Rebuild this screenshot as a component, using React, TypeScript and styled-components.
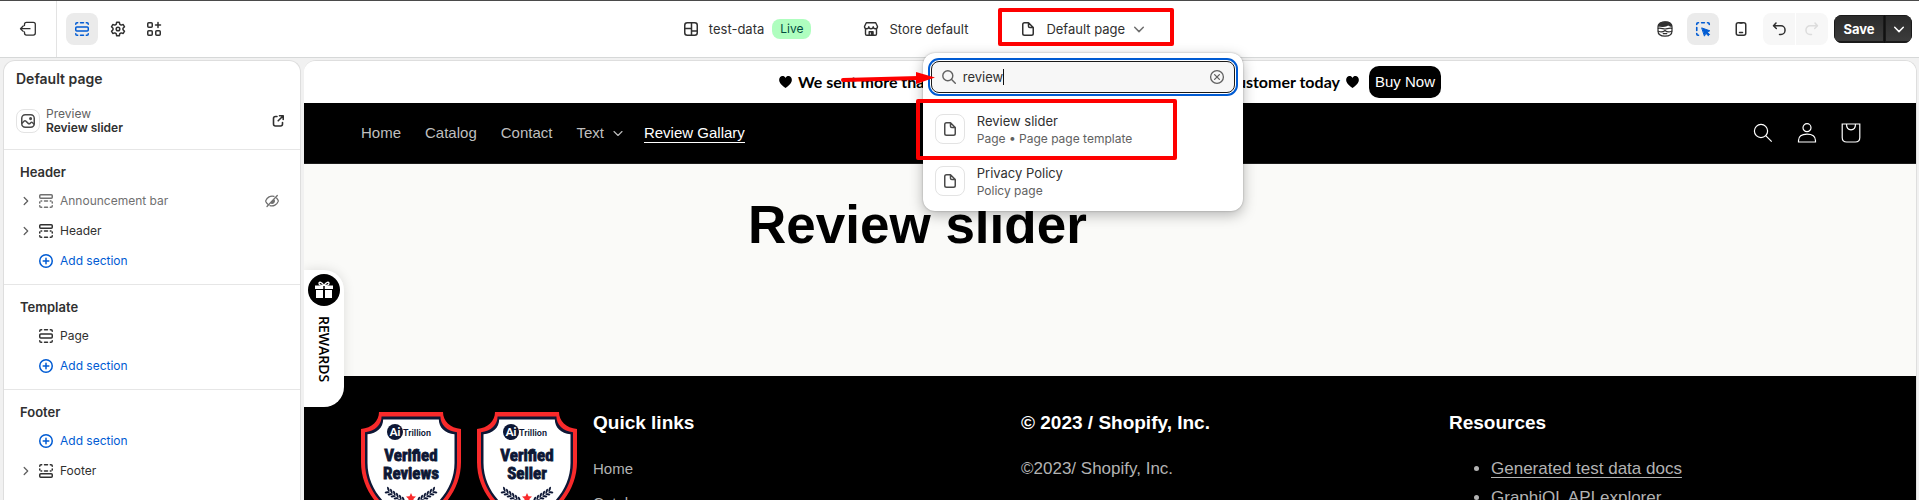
import React from "react";
import styled, { createGlobalStyle, css } from "styled-components";

const ui = `Inter, "Liberation Sans", sans-serif`;
const shop = `"Liberation Sans", Arial, sans-serif`;

const GlobalStyle = createGlobalStyle`
  * { box-sizing: border-box; }
  body { margin: 0; background: #f1f1f1; font-family: ${ui}; color: #303030; }
  button, input { font: inherit; color: inherit; }
  h1, h2, h3, p, ul { margin: 0; padding: 0; }
  svg { display: block; flex: none; }
`;

const Shell = styled.div`
  display: flex;
  flex-direction: column;
  height: 100vh;
  overflow: hidden;
  border-top: 1px solid #4a4a4a;
`;

/* ---------- top bar ---------- */
const TopBar = styled.header`
  position: relative;
  z-index: 2;
  display: flex;
  align-items: center;
  flex: none;
  height: 57px;
  padding-right: 7px;
  background: #fff;
  border-bottom: 1px solid #d6d8d8;
`;
const ExitArea = styled.div`
  display: flex;
  align-items: center;
  justify-content: center;
  width: 57px;
  align-self: stretch;
  border-right: 1px solid #e3e3e3;
`;
const ToolGroup = styled.div<{ $gap: number }>`
  display: flex;
  align-items: center;
  gap: ${(p) => p.$gap}px;
`;
const LeftTools = styled(ToolGroup)`
  padding-left: 9px;
`;
const ToolButton = styled.button<{ $active?: boolean }>`
  display: flex;
  align-items: center;
  justify-content: center;
  width: 32px;
  height: 32px;
  padding: 0;
  border: 0;
  border-radius: 8px;
  background: ${(p) => (p.$active ? "#ebebeb" : "transparent")};
  color: ${(p) => (p.$active ? "#005bd3" : "#303030")};
`;
const HistoryGroup = styled.div`
  display: flex;
  gap: 1px;
  border-radius: 8px;
  overflow: hidden;
`;
const HistoryButton = styled(ToolButton)`
  border-radius: 0;
  background: #f7f7f7;
  &:disabled { color: #dcdcdc; }
`;
const SaveGroup = styled.div`
  display: flex;
  gap: 1px;
  height: 28px;
  border-radius: 8px;
  overflow: hidden;
  background: #111;
`;
const SaveButton = styled.button<{ $width: number }>`
  display: flex;
  align-items: center;
  justify-content: center;
  width: ${(p) => p.$width}px;
  padding: 0;
  border: 1px solid #1a1a1a;
  border-bottom-width: 2px;
  background: linear-gradient(#2b2b2b, #3c3c3c);
  color: #fff;
  font-size: 13px;
  font-weight: 700;
`;
const Contexts = styled.div`
  display: flex;
  flex: 1;
  justify-content: center;
  align-items: center;
  gap: 50px;
  padding-left: 11px;
`;
const ContextButton = styled.button`
  display: flex;
  align-items: center;
  height: 32px;
  padding: 0;
  border: 0;
  background: none;
  font-size: 13px;
  line-height: 20px;
  white-space: nowrap;
  & > svg:first-child { margin-right: 8px; }
  & > svg:nth-child(2) { margin-left: 4px; color: #707070; }
`;
const LiveBadge = styled.span`
  margin-left: 8px;
  padding: 0 8px;
  border-radius: 8px;
  background: #affebf;
  color: #014b40;
  font-size: 12px;
`;
const PickerAnchor = styled.div`
  position: relative;
`;

/* ---------- page picker ---------- */
const Picker = styled.div`
  position: absolute;
  top: 40px;
  left: 50%;
  width: 320px;
  margin-left: -161px;
  padding: 8px 8px 4px;
  border-radius: 12px;
  background: #fff;
  box-shadow: 0 4px 14px rgba(0, 0, 0, 0.28), 0 0 2px rgba(0, 0, 0, 0.3);
`;
const SearchBox = styled.div`
  position: relative;
  display: flex;
  align-items: center;
  gap: 4px;
  height: 32px;
  padding: 0 7px;
  border: 1px solid #1a1a1a;
  border-radius: 8px;
  background: #f7f7f7;
  color: #616161;
  outline: 2px solid #005bd3;
  outline-offset: 1px;
`;
const SearchInput = styled.input`
  flex: 1;
  min-width: 0;
  padding: 0;
  border: 0;
  outline: 0;
  background: none;
  color: #303030;
  font-size: 13px;
  line-height: 20px;
`;
const Caret = styled.span`
  position: absolute;
  left: 71px;
  top: 7px;
  width: 1px;
  height: 16px;
  background: #111;
`;
const ClearButton = styled.button`
  padding: 0;
  border: 0;
  background: none;
  color: #616161;
`;
const Results = styled.ul`
  margin-top: 10px;
  list-style: none;
`;
const Result = styled.button`
  display: flex;
  align-items: center;
  gap: 12px;
  width: 100%;
  height: 52px;
  padding: 0 4px;
  border: 0;
  background: none;
  text-align: left;
`;
const Thumb = styled.span<{ $size: number }>`
  display: flex;
  align-items: center;
  justify-content: center;
  flex: none;
  width: ${(p) => p.$size}px;
  height: ${(p) => p.$size}px;
  border: 1px solid #e3e3e3;
  border-radius: 8px;
  color: #4a4a4a;
`;
const ResultTitle = styled.span`
  display: block;
  font-size: 13px;
  line-height: 20px;
`;
const ResultMeta = styled.span`
  display: block;
  color: #616161;
  font-size: 12px;
  line-height: 16px;
`;

/* ---------- annotations ---------- */
const Mark = styled.div`
  position: absolute;
  border: 4px solid #fe0000;
  border-radius: 2px;
  pointer-events: none;
`;
const TriggerMark = styled(Mark)`
  inset: -5px -25px -1px -20px;
`;
const ResultMark = styled(Mark)`
  top: 46px;
  left: -7px;
  width: 261px;
  height: 61px;
`;
const Arrow = styled.svg`
  position: absolute;
  top: 16px;
  left: -82px;
`;

/* ---------- sidebar ---------- */
const Workspace = styled.div`
  display: flex;
  flex: 1;
  min-height: 0;
  gap: 3px;
  padding: 2px 2px 0 3px;
`;
const Sidebar = styled.aside`
  flex: none;
  width: 298px;
  border: 1px solid #dedede;
  border-bottom: 0;
  border-radius: 12px 12px 0 0;
  background: #fff;
  overflow: hidden;
`;
const SidebarTitle = styled.h2`
  padding: 8px 12px;
  font-size: 14px;
  line-height: 20px;
  font-weight: 600;
`;
const PreviewRow = styled.div`
  display: flex;
  align-items: center;
  gap: 6px;
  height: 48px;
  margin-bottom: 4px;
  padding: 0 12px;
  & > svg { margin-left: auto; }
`;
const PreviewLabel = styled.div`
  color: #616161;
  font-size: 12px;
  line-height: 14px;
  strong { display: block; color: #303030; font-weight: 600; }
`;
const Section = styled.section`
  padding: 8px 16px;
  border-top: 1px solid #e6e6e6;
`;
const SectionTitle = styled.h3`
  font-size: 13px;
  line-height: 28px;
  font-weight: 600;
`;
const TreeRow = styled.button<{ $link?: boolean; $muted?: boolean }>`
  display: grid;
  grid-template-columns: 16px 20px 1fr 22px;
  align-items: center;
  width: 100%;
  height: 30px;
  padding: 0;
  border: 0;
  background: none;
  text-align: left;
  font-size: 12px;
  line-height: 20px;
  color: ${(p) => (p.$link ? "#005bd3" : p.$muted ? "#707070" : "#303030")};
  span:first-child { color: #616161; }
  span:nth-child(3) { padding-left: 4px; }
`;

/* ---------- storefront preview ---------- */
const Storefront = styled.main`
  position: relative;
  flex: 1;
  min-width: 0;
  border: 1px solid #dedede;
  border-width: 1px 1px 0 0;
  border-radius: 12px 12px 0 0;
  overflow: hidden;
  background: #fafaf8;
  font-family: ${shop};
`;
const Announcement = styled.div`
  display: flex;
  align-items: center;
  justify-content: center;
  gap: 6px;
  height: 42px;
  background: #fff;
  color: #000;
`;
const Message = styled.div`
  display: flex;
  justify-content: space-between;
  width: 542px;
  font: 700 16px/20px Lato, sans-serif;
`;
const BuyButton = styled.a`
  margin-left: 4px;
  padding: 0 6px;
  border-radius: 10px;
  background: #000;
  color: #fff;
  font-size: 15px;
  line-height: 32px;
  text-decoration: none;
`;
const ShopHeader = styled.header`
  display: flex;
  align-items: center;
  justify-content: space-between;
  height: 61px;
  padding: 0 43px 0 57px;
  background: #000;
  border-bottom: 1px solid #1c1c1c;
`;
const ShopNav = styled.nav`
  display: flex;
  gap: 24px;
`;
const NavLink = styled.a<{ $current?: boolean }>`
  display: flex;
  align-items: center;
  gap: 9px;
  color: #bfbfbf;
  font-size: 15px;
  line-height: 18px;
  text-decoration: none;
  border-bottom: 1px solid transparent;
  svg { margin-right: -3px; }
  ${(p) => p.$current && css`color: #fff; border-color: #fff;`}
`;
const ShopIcons = styled.div`
  display: flex;
`;
const ShopIconButton = styled.button`
  display: flex;
  align-items: center;
  justify-content: center;
  width: 44px;
  height: 44px;
  padding: 0;
  border: 0;
  background: none;
  color: #fff;
`;
const PageBody = styled.article`
  max-width: 724px;
  min-height: 212px;
  margin: 0 auto;
  padding-top: 28px;
`;
const PageTitle = styled.h1`
  color: #000;
  font-size: 53px;
  line-height: 66px;
  font-weight: 700;
`;
const ShopFooter = styled.footer`
  display: grid;
  grid-template-columns: 232px repeat(3, 1fr);
  padding: 36px 39px 36px 57px;
  background: #000;
  color: #b3b3b3;
`;
const Badges = styled.div`
  display: flex;
  gap: 16px;
`;
const FooterTitle = styled.h2`
  margin-bottom: 18px;
  color: #fff;
  font-size: 19px;
  line-height: 22px;
  font-weight: 700;
`;
const FooterLink = styled.a`
  display: block;
  color: inherit;
  font-size: 15px;
  line-height: 34px;
  text-decoration: none;
`;
const FooterText = styled.p`
  font-size: 17px;
  line-height: 34px;
`;
const ResourceList = styled.ul`
  padding: 2px 0 0 42px;
  font-size: 17px;
  line-height: 29px;
  a { color: inherit; text-underline-offset: 3px; text-decoration-thickness: 1px; }
`;
const RewardsTab = styled.button`
  position: absolute;
  top: 209px;
  left: 0;
  display: flex;
  flex-direction: column;
  align-items: center;
  gap: 10px;
  width: 40px;
  height: 137px;
  padding: 4px;
  border: 0;
  border-radius: 0 20px 20px 0;
  background: #fff;
  box-shadow: 0 0 12px rgba(0, 0, 0, 0.12);
  color: #000;
`;
const RewardsLabel = styled.span`
  writing-mode: vertical-rl;
  font: 600 14px/20px "Open Sans", sans-serif;
`;

/* ---------- icons ---------- */
const Icon = ({ children, size = 20, width = 1.5, box = "0 0 20 20" }: { children: React.ReactNode; size?: number; width?: number; box?: string }) => (
  <svg width={size} height={size} viewBox={box} fill="none" stroke="currentColor" strokeWidth={width} strokeLinecap="round" strokeLinejoin="round" aria-hidden="true">
    {children}
  </svg>
);
const ExitIcon = () => (
  <Icon size={20} width={1.3}>
    <path d="M6.5 6.5V5.3a2 2 0 0 1 2-2h6.8a2 2 0 0 1 2 2v8.8a2 2 0 0 1-2 2H8.500a2 2 0 0 1-2-2V13M12 9.700H2.500M5.200 7 2.500 9.700l2.700 2.700" />
  </Icon>
);
const SectionIcon = () => (
  <Icon>
    <rect x="3.750" y="8" width="12.500" height="4" rx="1" />
    <path d="M3.750 5.200v-.2c0-.7.5-1.250 1.250-1.250h.7M8.500 3.750h3M14.300 3.750h.7c.7 0 1.250.5 1.250 1.250v.2M3.750 14.800v.2c0 .7.5 1.250 1.250 1.250h.7M8.500 16.250h3M14.300 16.250h.7c.7 0 1.250-.5 1.250-1.250v-.2" />
  </Icon>
);
const HeaderSectionIcon = () => (
  <Icon>
    <rect x="3.750" y="3.750" width="12.500" height="3.500" rx="1" />
    <path d="M5 10h.7M8.500 10h3M14.300 10h.7M3.750 11v1M16.250 11v1M3.750 14.800v.2c0 .7.5 1.250 1.250 1.250h.7M8.500 16.250h3M14.300 16.250h.7c.7 0 1.250-.5 1.250-1.250v-.2" />
  </Icon>
);
const FooterSectionIcon = () => (
  <Icon>
    <rect x="3.750" y="12.750" width="12.500" height="3.500" rx="1" />
    <path d="M3.750 5.200v-.2c0-.7.5-1.250 1.250-1.250h.7M8.500 3.750h3M14.300 3.750h.7c.7 0 1.250.5 1.250 1.250v.2M3.750 8v1M16.250 8v1M5 10h.7M8.500 10h3M14.300 10h.7" />
  </Icon>
);
const GearIcon = () => (
  <Icon>
    <path d="M8.700 3.300h2.600l.5 2 1.400.8 2-.6 1.300 2.300-1.500 1.400v1.600l1.500 1.400-1.300 2.300-2-.6-1.400.8-.5 2H8.700l-.5-2-1.400-.8-2 .6-1.300-2.300L5 10.800V9.200L3.500 7.800l1.300-2.300 2 .6 1.400-.8z" />
    <circle cx="10" cy="10" r="1.800" />
  </Icon>
);
const AppsIcon = () => (
  <Icon>
    <rect x="3.750" y="3.750" width="4.500" height="4.500" rx="1" />
    <rect x="3.750" y="11.750" width="4.500" height="4.500" rx="1" />
    <rect x="11.750" y="11.750" width="4.500" height="4.500" rx="1" />
    <path d="M14 3.500v5M11.500 6h5" />
  </Icon>
);
const ThemeIcon = () => (
  <Icon>
    <rect x="3.750" y="3.750" width="12.500" height="12.500" rx="2.500" />
    <path d="M4 9.500h6.500M10.500 4v12M10.500 12h5.500" />
  </Icon>
);
const StoreIcon = () => (
  <Icon width={1.4}>
    <path d="M5.300 3.750h9.400l1.800 3.800c0 1.300-.9 2.200-2.100 2.200-1.100 0-2.200-.8-2.200-2 0 1.200-1 2-2.200 2s-2.200-.8-2.200-2c0 1.200-1.100 2-2.200 2-1.200 0-2.100-.9-2.100-2.200zM4.500 10v5c0 .7.500 1.250 1.250 1.250h8.500c.7 0 1.250-.5 1.250-1.250v-5M8.200 16v-3.200h3.600V16" />
    <path d="M10.500 12.800h1.300V16h-1.300z" fill="currentColor" />
  </Icon>
);
const PageIcon = () => (
  <Icon>
    <path d="M6.500 3.750h4L15.250 8.500v6c0 1-.8 1.750-1.750 1.750h-7c-1 0-1.750-.8-1.750-1.750v-9c0-1 .8-1.750 1.750-1.750zM10.500 4v3.200c0 .7.500 1.300 1.300 1.300H15" />
  </Icon>
);
const ChevronDown = () => (
  <Icon><path d="M5.700 8.300 10 12.600l4.300-4.300" /></Icon>
);
const NavChevron = () => (
  <Icon size={10} width={1.100} box="5 5 10 10"><path d="M6 8.500 10 12.500l4-4" /></Icon>
);
const ChevronRight = () => (
  <Icon size={12} width={1.300} box="4 4 12 12"><path d="M8.200 6.500 11.700 10l-3.500 3.500" /></Icon>
);
const PlusCircle = () => (
  <Icon><circle cx="10" cy="10" r="6.250" /><path d="M10 7.200v5.600M7.200 10h5.600" /></Icon>
);
const EyeOff = () => (
  <Icon width={1.300}>
    <path d="M15.300 4.500 5 15.500M12 5.300c-3.500-1-7 1-8.200 4.300-.1.300-.1.500 0 .8.400 1 1 1.900 1.800 2.600M14.700 7.300c.7.700 1.200 1.500 1.500 2.300.1.300.1.500 0 .8-1.200 3.300-4.800 5.200-8.200 4.300M12.300 9.500c.4 1.700-1 3-2.600 2.800z" />
  </Icon>
);
const ImageIcon = () => (
  <Icon>
    <rect x="3.750" y="3.750" width="12.500" height="12.500" rx="3.500" />
    <path d="m4 12.200 2-2c.6-.6 1.400-.6 2 0l2.200 2.200c.6.600 1.300.6 1.900 0l.6-.6c.6-.6 1.300-.6 1.900 0l1.400 1.300" />
    <circle cx="12.600" cy="7.600" r=".8" fill="currentColor" />
  </Icon>
);
const ExternalIcon = () => (
  <Icon width={1.600}>
    <path d="M9 5.500H7.500A2 2 0 0 0 5.500 7.500V13A2 2 0 0 0 7.500 15H12.500A2 2 0 0 0 14.500 13v-1.500M11.500 4.800h3.700v3.700M15 5 10.200 9.800" />
  </Icon>
);
const SearchIcon = () => (
  <Icon width={1.400}><circle cx="8.800" cy="8.800" r="5" /><path d="m12.600 12.600 3.700 3.700" /></Icon>
);
const ClearIcon = () => (
  <Icon width={1.300}><circle cx="10" cy="10" r="6.400" /><path d="m7.600 7.600 4.800 4.800M12.400 7.600l-4.800 4.800" /></Icon>
);
const MaskIcon = () => (
  <Icon width={1.200}>
    <path d="M3 8C3 5 5.500 2.800 10 2.800S17 5 17 8v4c0 3.300-2.800 5.200-7 5.200S3 15.300 3 12z" />
    <path d="M3.300 7C4.200 4 7 3 10 3c3.200 0 6 1 6.700 4-1.500.5-2.600-.4-3.500-1.200C11.600 7.300 8 7.800 3.300 7z" fill="currentColor" />
    <path d="M3.300 9.300c2.500-.6 4.700.7 6.700.7s4.200-1.300 6.700-.7M3.300 12.200c2.700 1.200 5 .8 6.700-.7 1.700 1.500 4 1.900 6.700.7M8.200 14.600h3.600" />
  </Icon>
);
const InspectIcon = () => (
  <Icon width={1.600}>
    <path d="M3.750 5.500V5c0-.7.5-1.250 1.250-1.250h.5M8.600 3.750h2.800M14.500 3.750h.5c.7 0 1.250.5 1.250 1.250v.5M3.750 8.600v2.800M3.750 14.500v.5c0 .7.5 1.250 1.250 1.250h.5" />
    <path d="m9 9 7.800 2.800-2.600 1.200 2.400 2.500-1.300 1.200-2.400-2.400-1.300 2.500z" fill="currentColor" strokeWidth={1} />
  </Icon>
);
const PhoneIcon = () => (
  <Icon><rect x="5.250" y="3.750" width="9.500" height="12.500" rx="2" /><path d="M8.500 13.500h3M9 4h2" /></Icon>
);
const UndoIcon = () => (
  <Icon><path d="M7 4 4.500 6.800 7.300 9.500M4.700 6.800H12a4 4 0 0 1 4 4v.7a4 4 0 0 1-4 4h-1.500" /></Icon>
);
const RedoIcon = () => (
  <Icon><path d="m13 4 2.500 2.800-2.800 2.700M15.300 6.800H8a4 4 0 0 0-4 4v.7a4 4 0 0 0 4 4h1.500" /></Icon>
);
const HeartIcon = () => (
  <svg width="13" height="12" viewBox="0 0 13 12" fill="#000" aria-hidden="true">
    <path d="M6.500 2C5.500 0 3.500-.3 2 .6.200 1.600-.3 4 .6 6c1 2.200 3.600 4.300 5.900 6 2.300-1.700 4.900-3.800 5.900-6 .9-2 .4-4.400-1.400-5.400C9.500-.3 7.500 0 6.500 2z" />
  </svg>
);
const CartSearch = () => (
  <svg width="20" height="20" viewBox="0 0 20 20" fill="none" stroke="currentColor" strokeWidth="1.200"><circle cx="8" cy="8" r="6.600" /><path d="m12.700 12.700 6 6" /></svg>
);
const AccountIcon = () => (
  <svg width="20" height="20" viewBox="0 0 20 20" fill="none" stroke="currentColor" strokeWidth="1.200"><circle cx="10" cy="4.700" r="4" /><path d="M1.500 19v-1.500c0-4 3-6.300 8.500-6.300s8.500 2.300 8.500 6.300V19z" /></svg>
);
const BagIcon = () => (
  <svg width="20" height="20" viewBox="0 0 20 20" fill="none" stroke="currentColor" strokeWidth="1.200"><path d="M1.200 1h17.600v13.500c0 3-1.800 4.500-4.500 4.500H5.700c-2.700 0-4.500-1.500-4.500-4.500zM5.500 1c0 4 1.600 5.800 4.500 5.800S14.500 5 14.500 1" /></svg>
);
const GiftIcon = () => (
  <svg width="32" height="32" viewBox="0 0 32 32" aria-hidden="true">
    <circle cx="16" cy="16" r="16" fill="#000" />
    <path d="M7 11.500h18V15H7zM8 16h7v8H8zM17 16h7v8h-7z" fill="#fff" />
    <path d="M16 11.500c-2-3.500-5-4-5-2.300 0 1.400 2.500 2.300 5 2.300zM16 11.500c2-3.500 5-4 5-2.300 0 1.400-2.500 2.300-5 2.300z" fill="none" stroke="#fff" strokeWidth="1.300" />
    <path d="M16 12v12" stroke="#000" strokeWidth="1.500" />
  </svg>
);

const shield = "M18 0H82C82 9 89 16 100 17V50C100 80 78 104 50 116C22 104 0 80 0 50V17C11 16 18 9 18 0Z";
const leaves = [0, 1, 2, 3, 4, 5];

const TrustBadge = ({ line }: { line: string }) => (
  <svg width="100" height="116" viewBox="0 0 100 116" role="img" aria-label={`AiTrillion Verified ${line}`}>
    <path d={shield} fill="#f92a2b" />
    <path d={shield} fill="#0d1735" transform="translate(4 4.500) scale(.92)" />
    <path d={shield} fill="#fff" transform="translate(6.500 7.500) scale(.87)" />
    <circle cx="34" cy="20" r="8" fill="#0d1735" />
    <text x="34" y="24" textAnchor="middle" fill="#fff" fontFamily="Lato, sans-serif" fontWeight="900" fontSize="11">Ai</text>
    <text x="42" y="24" fill="#0d1735" fontFamily="Roboto, sans-serif" fontWeight="600" fontSize="9">Trillion</text>
    <g fill="#0d1735" stroke="#0d1735" strokeWidth="0.800" textAnchor="middle" fontFamily="'Liberation Sans Narrow', 'Roboto Condensed', sans-serif" fontWeight="700" fontSize="17">
      <text x="50" y="49">Verified</text>
      <text x="50" y="67">{line}</text>
    </g>
    {[1, -1].map((dir) => (
      <g key={dir} transform={`translate(50 0) scale(${dir} 1)`} fill="#0d1735">
        {leaves.map((i) => (
          <g key={i} transform={`translate(${22 - i * 3} ${79 + i * 2})`}>
            <ellipse rx="2.600" ry="1" transform="rotate(-70) translate(2 0)" />
            <ellipse rx="2.600" ry="1" transform="rotate(10) translate(2 1)" />
          </g>
        ))}
      </g>
    ))}
    <path d="m50 81 1.500 3.200 3.500.4-2.600 2.400.7 3.500-3.100-1.700-3.100 1.700.7-3.500-2.600-2.400 3.500-.4z" fill="#f92a2b" />
  </svg>
);

type Row = { label: string; icon: React.ReactNode; open?: boolean; link?: boolean; hidden?: boolean };
const addRow: Row = { label: "Add section", icon: <PlusCircle />, link: true };
const sections: { title: string; rows: Row[] }[] = [
  {
    title: "Header",
    rows: [
      { label: "Announcement bar", icon: <HeaderSectionIcon />, open: true, hidden: true },
      { label: "Header", icon: <HeaderSectionIcon />, open: true },
      addRow,
    ],
  },
  { title: "Template", rows: [{ label: "Page", icon: <SectionIcon /> }, addRow] },
  { title: "Footer", rows: [addRow, { label: "Footer", icon: <FooterSectionIcon />, open: true }] },
];

const results = [
  { title: "Review slider", meta: "Page • Page page template" },
  { title: "Privacy Policy", meta: "Policy page" },
];

const PagePicker = () => (
  <Picker>
    <SearchBox>
      <SearchIcon />
      <SearchInput type="text" aria-label="Search pages" defaultValue="review" />
      <Caret />
      <ClearButton aria-label="Clear"><ClearIcon /></ClearButton>
    </SearchBox>
    <Results>
      {results.map((r) => (
        <li key={r.title}>
          <Result>
            <Thumb $size={30}><PageIcon /></Thumb>
            <span>
              <ResultTitle>{r.title}</ResultTitle>
              <ResultMeta>{r.meta}</ResultMeta>
            </span>
          </Result>
        </li>
      ))}
    </Results>
    <ResultMark />
    <Arrow width="96" height="18" viewBox="0 0 96 18" aria-hidden="true">
      <path d="M2 11 78 9" stroke="#fe0000" strokeWidth="4" strokeLinecap="round" />
      <path d="M75 3 94 8.500 75 15z" fill="#fe0000" />
    </Arrow>
  </Picker>
);

export default function App() {
  return (
    <Shell>
      <GlobalStyle />
      <TopBar>
        <ExitArea><ToolButton aria-label="Exit"><ExitIcon /></ToolButton></ExitArea>
        <LeftTools $gap={4}>
          <ToolButton $active aria-label="Sections"><SectionIcon /></ToolButton>
          <ToolButton aria-label="Theme settings"><GearIcon /></ToolButton>
          <ToolButton aria-label="App embeds"><AppsIcon /></ToolButton>
        </LeftTools>
        <Contexts>
          <ContextButton><ThemeIcon />test-data<LiveBadge>Live</LiveBadge></ContextButton>
          <ContextButton><StoreIcon />Store default</ContextButton>
          <PickerAnchor>
            <ContextButton aria-expanded="true"><PageIcon />Default page<ChevronDown /></ContextButton>
            <PagePicker />
            <TriggerMark />
          </PickerAnchor>
        </Contexts>
        <ToolGroup $gap={6}>
          <ToolButton aria-label="Sidekick"><MaskIcon /></ToolButton>
          <ToolButton $active aria-label="Inspector"><InspectIcon /></ToolButton>
          <ToolButton aria-label="Mobile view"><PhoneIcon /></ToolButton>
          <HistoryGroup>
            <HistoryButton aria-label="Undo"><UndoIcon /></HistoryButton>
            <HistoryButton aria-label="Redo" disabled><RedoIcon /></HistoryButton>
          </HistoryGroup>
          <SaveGroup>
            <SaveButton $width={50}>Save</SaveButton>
            <SaveButton $width={27} aria-label="More save options"><ChevronDown /></SaveButton>
          </SaveGroup>
        </ToolGroup>
      </TopBar>
      <Workspace>
        <Sidebar>
          <SidebarTitle>Default page</SidebarTitle>
          <PreviewRow>
            <Thumb $size={24}><ImageIcon /></Thumb>
            <PreviewLabel>Preview<strong>Review slider</strong></PreviewLabel>
            <ExternalIcon />
          </PreviewRow>
          {sections.map((s) => (
            <Section key={s.title}>
              <SectionTitle>{s.title}</SectionTitle>
              {s.rows.map((r) => (
                <TreeRow key={r.label} $link={r.link} $muted={r.hidden}>
                  <span>{r.open && <ChevronRight />}</span>
                  <span>{r.icon}</span>
                  <span>{r.label}</span>
                  <span>{r.hidden && <EyeOff />}</span>
                </TreeRow>
              ))}
            </Section>
          ))}
        </Sidebar>
        <Storefront>
          <Announcement>
            <HeartIcon />
            <Message><span>We sent more than</span><span>customer today</span></Message>
            <HeartIcon />
            <BuyButton href="#buy">Buy Now</BuyButton>
          </Announcement>
          <ShopHeader>
            <ShopNav>
              <NavLink href="#home">Home</NavLink>
              <NavLink href="#catalog">Catalog</NavLink>
              <NavLink href="#contact">Contact</NavLink>
              <NavLink href="#text">Text<NavChevron /></NavLink>
              <NavLink href="#gallery" $current>Review Gallary</NavLink>
            </ShopNav>
            <ShopIcons>
              <ShopIconButton aria-label="Search"><CartSearch /></ShopIconButton>
              <ShopIconButton aria-label="Account"><AccountIcon /></ShopIconButton>
              <ShopIconButton aria-label="Cart"><BagIcon /></ShopIconButton>
            </ShopIcons>
          </ShopHeader>
          <PageBody><PageTitle>Review slider</PageTitle></PageBody>
          <ShopFooter>
            <Badges><TrustBadge line="Reviews" /><TrustBadge line="Seller" /></Badges>
            <div>
              <FooterTitle>Quick links</FooterTitle>
              <FooterLink href="#home">Home</FooterLink>
              <FooterLink href="#catalog">Catalog</FooterLink>
            </div>
            <div>
              <FooterTitle>© 2023 / Shopify, Inc.</FooterTitle>
              <FooterText>©2023/ Shopify, Inc.</FooterText>
            </div>
            <div>
              <FooterTitle>Resources</FooterTitle>
              <ResourceList>
                <li><a href="#docs">Generated test data docs</a></li>
                <li><a href="#graphiql">GraphiQL API explorer</a></li>
              </ResourceList>
            </div>
          </ShopFooter>
          <RewardsTab><GiftIcon /><RewardsLabel>REWARDS</RewardsLabel></RewardsTab>
        </Storefront>
      </Workspace>
    </Shell>
  );
}
